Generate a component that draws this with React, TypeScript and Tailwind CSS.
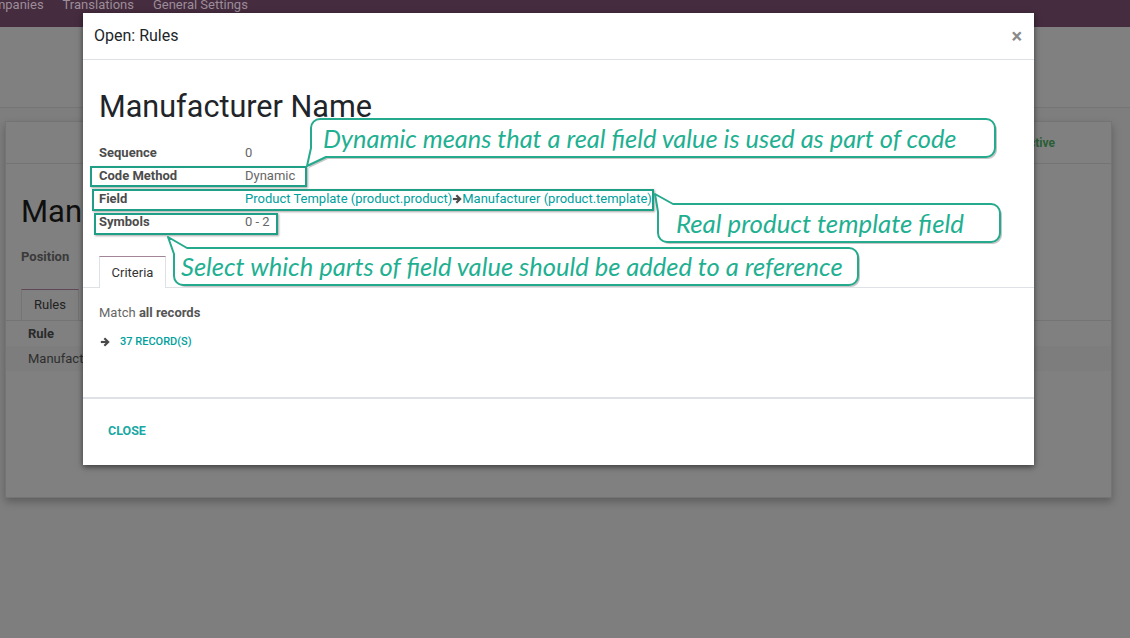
import React from "react";

const roboto = { fontFamily: "Roboto, 'Liberation Sans', sans-serif" };
const note = { fontFamily: "Lato, 'Open Sans', sans-serif" };

function Arrow({ className = "" }: { className?: string }) {
  return (
    <svg viewBox="0 0 12 12" className={className} aria-hidden="true">
      <path d="M1 6 H9" stroke="currentColor" strokeWidth="2.6" strokeLinecap="butt" fill="none" />
      <path d="M5.2 1.6 L9.8 6 L5.2 10.4" stroke="currentColor" strokeWidth="2.6" strokeLinejoin="miter" fill="none" />
    </svg>
  );
}

function Bubble({
  left,
  top,
  width,
  height,
  d,
  textLeft,
  textTop,
  text,
  size,
}: {
  left: number;
  top: number;
  width: number;
  height: number;
  d: string;
  textLeft: number;
  textTop: number;
  text: string;
  size: string;
}) {
  return (
    <div className="absolute" style={{ left, top, width, height }}>
      <svg className="absolute inset-0" width={width} height={height} viewBox={`0 0 ${width} ${height}`}>
        <path d={d} fill="rgba(0,0,0,0.22)" transform="translate(2,2)" />
        <path d={d} fill="#ffffff" stroke="#25aa8d" strokeWidth="2" strokeLinejoin="round" />
      </svg>
      <span
        className={`absolute whitespace-nowrap italic leading-[28px] text-[#1fb092] ${size}`}
        style={{ ...note, left: textLeft, top: textTop }}
      >
        {text}
      </span>
    </div>
  );
}

function Box({ left, top, width, height }: { left: number; top: number; width: number; height: number }) {
  return (
    <div
      className="absolute border-2 border-[#1f9f86] shadow-[1px_1px_2px_rgba(0,0,0,0.35)]"
      style={{ left, top, width, height }}
    />
  );
}

export default function App() {
  return (
    <div className="relative h-[638px] w-[1130px] overflow-hidden bg-[#7e7e7e]" style={roboto}>
      {/* background page (dimmed) */}
      <div className="flex h-[27px] items-start gap-[19px] overflow-hidden bg-[#452c3f] text-[13px] leading-[18px] text-[#9c8d98]">
        <span className="-mt-[4px] -ml-[22px]">Companies</span>
        <span className="-mt-[4px]">Translations</span>
        <span className="-mt-[4px]">General Settings</span>
      </div>
      <div className="h-[81px] border-b border-[#757575] bg-[#808080]" />
      <div className="px-[5px] pt-[13px] pr-[18px]">
        <div className="h-[377px] border border-[#747474] bg-[#808080] shadow-[0_4px_8px_rgba(0,0,0,0.25)]">
          <div className="flex h-[42px] items-center justify-end border-b border-[#747474] pr-[56px]">
            <span className="mt-[1px] text-[12px] font-bold text-[#2a5e36]">Active</span>
          </div>
          <div className="px-[15px]">
            <div className="mt-[30px] text-[31px] leading-[36px] text-[#0f0f0f]">Manufacturer Name</div>
            <div className="mt-[18px] text-[13px] font-bold leading-[18px] text-[#3a3a3a]">Position</div>
          </div>
          <div className="mt-[23px] flex h-[32px] items-end border-b border-[#747474] pl-[15px]">
            <div className="flex h-[31px] w-[58px] items-center justify-center border-x border-t border-[#747474] border-t-[#5e4858] text-[13px] text-[#222]">
              Rules
            </div>
          </div>
          <div className="flex h-[25px] items-center px-[22px] text-[13px] font-bold text-[#2a2a2a]">Rule</div>
          <div className="flex h-[25px] items-center bg-[#7d7d7d] px-[22px] text-[13px] text-[#2e2e2e]">
            Manufacturer Name
          </div>
        </div>
      </div>

      {/* modal */}
      <div className="absolute left-[83px] top-[13px] flex h-[452px] w-[951px] flex-col bg-white shadow-[0_2px_6px_rgba(0,0,0,0.55)]">
        <div className="flex h-[47px] shrink-0 items-center justify-between border-b border-[#dde1e6] pl-[11px] pr-[12px]">
          <span className="text-[16px] text-[#212529]">Open: Rules</span>
          <span className="text-[20px] font-bold leading-none text-[#8a8a8a]">×</span>
        </div>
        <div className="flex-1">
          <div className="px-[16px] pt-[29px]">
            <div className="text-[30.6px] leading-[36px] text-[#212529]">Manufacturer Name</div>
            <div className="mt-[16px] text-[13px] leading-[23px]">
              <div className="flex h-[23px] items-center">
                <span className="w-[146px] font-bold text-[#4c4c4c]">Sequence</span>
                <span className="text-[#666]">0</span>
              </div>
              <div className="flex h-[23px] items-center">
                <span className="w-[146px] font-bold text-[#4c4c4c]">Code Method</span>
                <span className="text-[#666]">Dynamic</span>
              </div>
              <div className="flex h-[23px] items-center">
                <span className="w-[146px] font-bold text-[#4c4c4c]">Field</span>
                <span className="flex items-center text-[#00a09d]">
                  Product Template (product.product)
                  <Arrow className="h-[10px] w-[10px] text-[#4a4a4a]" />
                  Manufacturer (product.template)
                </span>
              </div>
              <div className="flex h-[23px] items-center">
                <span className="w-[146px] font-bold text-[#4c4c4c]">Symbols</span>
                <span className="text-[#666]">0 - 2</span>
              </div>
            </div>
          </div>
          <div className="mt-[23px] flex h-[32px] items-end border-b border-[#dee2e6] pl-[16px]">
            <div className="-mb-px flex h-[32px] w-[67px] items-center justify-center border-x border-t border-[#dee2e6] border-t-[#a3859a] bg-white text-[13px] text-[#333]">
              Criteria
            </div>
          </div>
          <div className="px-[16px] pt-[15px] text-[13px]">
            <div className="leading-[20px] text-[#666]">
              Match <span className="font-bold text-[#555]">all records</span>
            </div>
            <div className="mt-[9px] flex h-[20px] items-center">
              <Arrow className="ml-[1px] h-[10px] w-[10px] text-[#4a4a4a]" />
              <span className="ml-[10px] text-[11px] font-medium text-[#00a09d]">37 RECORD(S)</span>
            </div>
          </div>
        </div>
        <div className="flex h-[68px] shrink-0 items-center border-t-2 border-[#dee2e6] px-[25px]">
          <span className="-mt-[2px] text-[12.5px] font-bold text-[#1aa8a4]">CLOSE</span>
        </div>
      </div>

      {/* annotations */}
      <Box left={90} top={166} width={217} height={21} />
      <Box left={92} top={189} width={562} height={22} />
      <Box left={94} top={213} width={184} height={22} />

      <Bubble
        left={300}
        top={112}
        width={705}
        height={60}
        d="M7,54 L11,36 V16 A9,9 0 0 1 20,7 H686 A9,9 0 0 1 695,16 V36 A9,9 0 0 1 686,45 H26 Z"
        textLeft={23}
        textTop={12}
        size="text-[25.4px]"
        text="Dynamic means that a real field value is used as part of code"
      />
      <Bubble
        left={645}
        top={185}
        width={365}
        height={65}
        d="M10,9 L28,19 H346 A9,9 0 0 1 355,28 V48 A9,9 0 0 1 346,57 H22 A9,9 0 0 1 13,48 V27 Z"
        textLeft={31}
        textTop={24}
        size="text-[25.8px]"
        text="Real product template field"
      />
      <Bubble
        left={160}
        top={228}
        width={710}
        height={66}
        d="M8,9 L27,20 H689 A9,9 0 0 1 698,29 V48 A9,9 0 0 1 689,57 H23 A9,9 0 0 1 14,48 V26 Z"
        textLeft={21}
        textTop={24}
        size="text-[25.5px]"
        text="Select which parts of field value should be added to a reference"
      />
    </div>
  );
}
